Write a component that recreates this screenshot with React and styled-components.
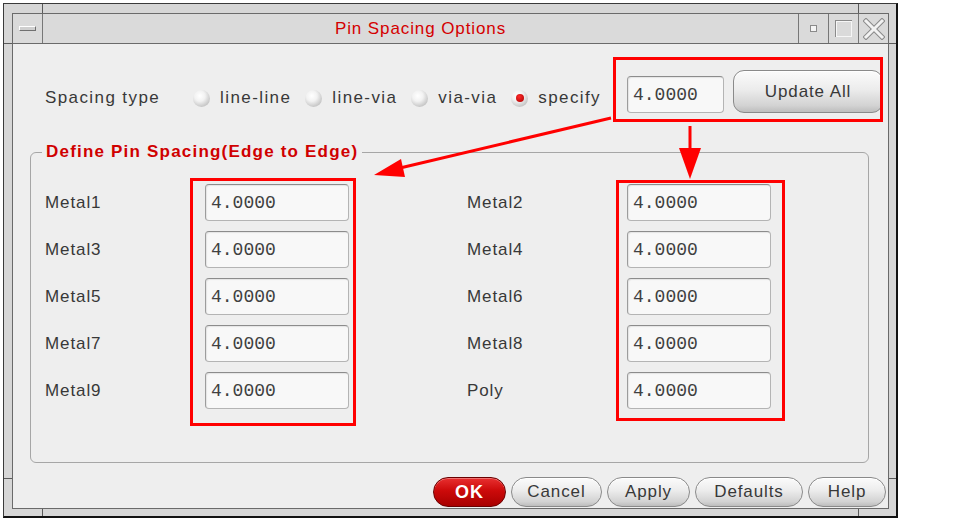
import React from "react";
import styled, { createGlobalStyle } from "styled-components";

const GlobalStyle = createGlobalStyle`
  body {
    margin: 0;
    background: #ffffff;
    font-family: "Liberation Sans", Arial, sans-serif;
  }
`;

const Page = styled.div`
  position: relative;
  width: 963px;
  height: 521px;
  overflow: hidden;
  padding: 3px 0 0 3px;
  box-sizing: border-box;
`;

const Window = styled.div`
  position: relative;
  width: 895px;
  height: 515px;
  box-sizing: border-box;
  border-top: 1px solid #3a3a3a;
  border-left: 1px solid #3a3a3a;
  border-right: 2px solid #111;
  border-bottom: 2px solid #111;
  background: #d6d6d6;
  padding: 9px 7px 7px 8px;
`;

const Tick = styled.div`
  position: absolute;
  background: #5a5a5a;
  left: ${(p) => p.$x}px;
  top: ${(p) => p.$y}px;
  width: ${(p) => p.$w}px;
  height: ${(p) => p.$h}px;
`;

const Inner = styled.div`
  height: 100%;
  box-sizing: border-box;
  border: 1px solid #6a6a6a;
  display: flex;
  flex-direction: column;
`;

const TitleBar = styled.div`
  height: 30px;
  box-sizing: border-box;
  border-bottom: 1px solid #6a6a6a;
  background: #dadada;
  display: flex;
`;

const MenuBox = styled.div`
  width: 30px;
  box-sizing: border-box;
  border-right: 1px solid #777;
  display: flex;
  align-items: center;
  justify-content: center;
`;

const MenuBar = styled.div`
  width: 17px;
  height: 5px;
  box-sizing: border-box;
  background: #cfcfcf;
  border-top: 1px solid #fff;
  border-left: 1px solid #fff;
  border-bottom: 1px solid #707070;
  border-right: 1px solid #707070;
`;

const Title = styled.div`
  flex: 1;
  text-align: center;
  color: #d40000;
  font-size: 17px;
  letter-spacing: 0.9px;
  line-height: 29px;
`;

const CtrlBox = styled.div`
  width: 30px;
  box-sizing: border-box;
  border-left: 1px solid #777;
  display: flex;
  align-items: center;
  justify-content: center;
`;

const Content = styled.div`
  flex: 1;
  background: #eeeeee;
  display: flex;
  flex-direction: column;
  padding: 0 2px 1px 0;
  color: #383838;
`;

const TopRow = styled.div`
  margin-top: 26px;
  height: 43px;
  display: flex;
  align-items: flex-end;
  padding-left: 32px;
  padding-right: 3px;
`;

const Text = styled.span`
  font-size: 17px;
  letter-spacing: ${(p) => p.$ls || 0.9}px;
  line-height: 20px;
  white-space: nowrap;
`;

const RadioGroup = styled.div`
  display: flex;
  margin-left: 33px;
  margin-bottom: 5px;
`;

const RadioItem = styled.label`
  display: flex;
  align-items: center;
  gap: 10px;
  margin-right: 14px;
`;

const Radio = styled.span`
  width: 17px;
  height: 17px;
  border-radius: 50%;
  box-sizing: border-box;
  display: flex;
  align-items: center;
  justify-content: center;
  background: radial-gradient(circle at 40% 35%, #ffffff 0%, #f2f2f2 35%, #c4c4c4 75%, #9a9a9a 100%);

  &::after {
    content: "";
    width: 8px;
    height: 8px;
    border-radius: 50%;
    background: radial-gradient(circle at 40% 35%, #ff2a2a, #a80000);
    display: ${(p) => (p.$on ? "block" : "none")};
  }
`;

const Field = styled.input`
  width: ${(p) => p.$w || 144}px;
  height: 37px;
  box-sizing: border-box;
  padding: 0 5px;
  margin: 0;
  font-family: "Liberation Mono", "Courier New", monospace;
  font-size: 18px;
  color: #404040;
  background: #f8f8f8;
  border: 1px solid #b4b4b4;
  border-top-color: #8c8c8c;
  border-left-color: #9c9c9c;
  border-radius: 4px;
  box-shadow: inset 1px 1px 1px rgba(0, 0, 0, 0.08);
  outline: none;
`;

const TopField = styled(Field)`
  margin-left: auto;
`;

const PillButton = styled.button`
  width: ${(p) => p.$w}px;
  height: ${(p) => p.$h || 30}px;
  box-sizing: border-box;
  padding: 0;
  border: 1px solid #8a8a8a;
  border-radius: ${(p) => p.$r || 15}px;
  background: linear-gradient(#fbfbfb 0%, #ececec 45%, #d2d2d2 85%, #bdbdbd 100%);
  color: #383838;
  font-family: "Liberation Sans", Arial, sans-serif;
  font-size: 17px;
  letter-spacing: 0.9px;
  box-shadow: inset 0 1px 0 #fff;
`;

const UpdateButton = styled(PillButton)`
  margin-left: 9px;
`;

const OkButton = styled(PillButton)`
  border-color: #6a0000;
  background: linear-gradient(#e83030 0%, #cc0a0a 45%, #a80000 100%);
  color: #ffffff;
  font-weight: bold;
  font-size: 18px;
  box-shadow: inset 0 1px 0 #f07070;
`;

const Group = styled.fieldset`
  margin: 29px 17px 0 17px;
  padding: 0;
  border: 1px solid #a6a6a6;
  border-radius: 6px;
  min-width: 0;
`;

const Legend = styled.legend`
  margin-left: 11px;
  padding: 0 4px;
  color: #d00000;
  font-weight: bold;
  font-size: 17px;
  letter-spacing: 1.2px;
  line-height: 20px;
`;

const Columns = styled.div`
  display: flex;
  gap: 118px;
  padding: 22px 0 53px 14px;
`;

const Column = styled.div`
  display: grid;
  grid-template-columns: 160px 144px;
  row-gap: 10px;
  align-items: center;
`;

const ButtonRow = styled.div`
  margin-top: 14px;
  display: flex;
  justify-content: flex-end;
  gap: 5px;
`;

const Annotations = styled.svg`
  position: absolute;
  left: 0;
  top: 0;
  pointer-events: none;
`;

const leftRows = ["Metal1", "Metal3", "Metal5", "Metal7", "Metal9"];
const rightRows = ["Metal2", "Metal4", "Metal6", "Metal8", "Poly"];
const radios = [
  { label: "line-line" },
  { label: "line-via" },
  { label: "via-via" },
  { label: "specify", on: true },
];

const CloseIcon = () => (
  <svg width="22" height="22" viewBox="0 0 22 22">
    <path d="M3 3 L19 19 M19 3 L3 19" stroke="#8a8a8a" strokeWidth="5" strokeLinecap="square" />
    <path d="M3 3 L19 19 M19 3 L3 19" stroke="#f2f2f2" strokeWidth="3" strokeLinecap="square" />
  </svg>
);

const LayerColumn = ({ rows }) => (
  <Column>
    {rows.map((name) => (
      <React.Fragment key={name}>
        <Text>{name}</Text>
        <Field defaultValue="4.0000" readOnly />
      </React.Fragment>
    ))}
  </Column>
);

export default function App() {
  return (
    <Page>
      <GlobalStyle />
      <Window>
        <Tick $x={38} $y={0} $w={1} $h={9} />
        <Tick $x={854} $y={0} $w={1} $h={9} />
        <Tick $x={38} $y={505} $w={1} $h={7} />
        <Tick $x={854} $y={505} $w={1} $h={7} />
        <Tick $x={0} $y={39} $w={8} $h={1} />
        <Tick $x={885} $y={39} $w={7} $h={1} />
        <Tick $x={0} $y={474} $w={8} $h={1} />
        <Tick $x={885} $y={474} $w={7} $h={1} />
        <Inner>
          <TitleBar>
            <MenuBox>
              <MenuBar />
            </MenuBox>
            <Title>Pin Spacing Options</Title>
            <CtrlBox>
              <svg width="8" height="8" viewBox="0 0 8 8">
                <rect x="0.5" y="0.5" width="6" height="6" fill="#f4f4f4" stroke="#8a8a8a" />
              </svg>
            </CtrlBox>
            <CtrlBox>
              <svg width="20" height="20" viewBox="0 0 20 20">
                <rect x="1.5" y="1.5" width="16" height="16" fill="none" stroke="#8a8a8a" />
                <rect x="2.5" y="2.5" width="15" height="15" fill="none" stroke="#f6f6f6" />
              </svg>
            </CtrlBox>
            <CtrlBox>
              <CloseIcon />
            </CtrlBox>
          </TitleBar>
          <Content>
            <TopRow>
              <Text $ls={1.4} style={{ marginBottom: 5 }}>
                Spacing type
              </Text>
              <RadioGroup>
                {radios.map((r) => (
                  <RadioItem key={r.label}>
                    <Radio $on={r.on} />
                    <Text $ls={1.4}>{r.label}</Text>
                  </RadioItem>
                ))}
              </RadioGroup>
              <TopField $w={97} defaultValue="4.0000" readOnly />
              <UpdateButton $w={150} $h={43} $r={11}>
                Update All
              </UpdateButton>
            </TopRow>
            <Group>
              <Legend>Define Pin Spacing(Edge to Edge)</Legend>
              <Columns>
                <LayerColumn rows={leftRows} />
                <LayerColumn rows={rightRows} />
              </Columns>
            </Group>
            <ButtonRow>
              <OkButton $w={73}>OK</OkButton>
              <PillButton $w={91}>Cancel</PillButton>
              <PillButton $w={83}>Apply</PillButton>
              <PillButton $w={108}>Defaults</PillButton>
              <PillButton $w={78}>Help</PillButton>
            </ButtonRow>
          </Content>
        </Inner>
      </Window>
      <Annotations width="963" height="521" viewBox="0 0 963 521">
        <g fill="none" stroke="#ff0000" strokeWidth="3">
          <rect x="614.5" y="58.5" width="267" height="62" />
          <rect x="191.5" y="179.5" width="163" height="245" />
          <rect x="617.5" y="181.5" width="166" height="238" />
          <line x1="611" y1="118" x2="400" y2="168" />
          <line x1="690" y1="126" x2="690" y2="152" />
        </g>
        <g fill="#ff0000">
          <polygon points="374,175 405,177 401,159" />
          <polygon points="679,148 701,148 690,179" />
        </g>
      </Annotations>
    </Page>
  );
}
